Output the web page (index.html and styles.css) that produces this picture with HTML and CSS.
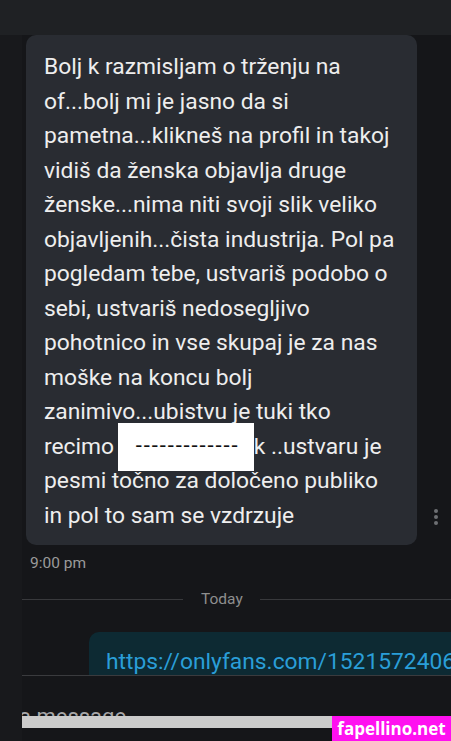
FILE: index.html
```html
<!DOCTYPE html>
<html>
<head>
<meta charset="utf-8">
<link rel="stylesheet" href="styles.css">
</head>
<body>
<div class="topbar"></div>
<div class="page">
  <div class="gutter"></div>
  <div class="main">
    <div class="msg-row">
      <div class="bubble">
        Bolj k razmisljam o trženju na<br>
        of...bolj mi je jasno da si<br>
        pametna...klikneš na profil in takoj<br>
        vidiš da ženska objavlja druge<br>
        ženske...nima niti svoji slik veliko<br>
        objavljenih...čista industrija. Pol pa<br>
        pogledam tebe, ustvariš podobo o<br>
        sebi, ustvariš nedosegljivo<br>
        pohotnico in vse skupaj je za nas<br>
        moške na koncu bolj<br>
        zanimivo...ubistvu je tuki tko<br>
        recimo <span class="redact"><span class="dashes">-------------</span></span>k ..ustvaru je<br>
        pesmi točno za določeno publiko<br>
        in pol to sam se vzdrzuje
      </div>
      <div class="kebab"><i></i><i></i><i></i></div>
    </div>
    <div class="time">9:00 pm</div>
    <div class="divider"><span class="line left"></span><span class="day">Today</span><span class="line right"></span></div>
    <div class="out-row">
      <div class="out-bubble">https://onlyfans.com/1521572406</div>
    </div>
    <div class="composer">
      <div class="placeholder-clip"><span class="placeholder">a message</span></div>
      <div class="graybar"></div>
    </div>
  </div>
</div>
<div class="watermark">fapellino.net</div>
</body>
</html>
```

FILE: styles.css
```css
html, body {
  margin: 0;
  padding: 0;
  background: #151619;
  width: 451px;
  height: 741px;
  overflow: hidden;
  font-family: Roboto, "Noto Sans", sans-serif;
}
.topbar {
  height: 35px;
  background: #1f2124;
}
.page {
  display: flex;
  height: 706px;
}
.gutter {
  width: 22px;
  background: #18191c;
  flex: none;
}
.main {
  flex: 1;
  min-width: 0;
  background: #151619;
  display: flex;
  flex-direction: column;
}
.msg-row {
  display: flex;
  align-items: flex-end;
}
.bubble {
  margin-left: 4px;
  width: 391px;
  box-sizing: border-box;
  padding: 15px 6px 12px 18px;
  background: #292c32;
  border-radius: 10px;
  color: #eeeeee;
  font-size: 22.8px;
  line-height: 34.5px;
  white-space: nowrap;
  overflow: hidden;
}
.redact {
  display: inline-block;
  width: 136px;
  height: 48px;
  margin: -7px 0 -7px -2px;
  background: #ffffff;
  vertical-align: middle;
  box-sizing: border-box;
  padding: 9px 0 0 18px;
  line-height: 28px;
  overflow: hidden;
}
.dashes {
  color: #111;
  font-size: 22px;
  letter-spacing: 1.9px;
}
.kebab {
  display: flex;
  flex-direction: column;
  gap: 2px;
  margin: 0 0 20px 17px;
}
.kebab i {
  width: 4px;
  height: 4px;
  border-radius: 2px;
  background: #6d6f73;
}
.time {
  margin: 9px 0 0 8px;
  color: #9b9b9b;
  font-size: 15.5px;
  line-height: 18px;
}
.divider {
  display: flex;
  align-items: center;
  margin-top: 18px;
  height: 18px;
}
.divider .line {
  height: 1px;
  background: #38393c;
}
.divider .left {
  width: 161px;
}
.divider .right {
  flex: 1;
}
.day {
  color: #8e8e8e;
  font-size: 15.5px;
  padding: 0 17px 0 18px;
  width: 42px;
}
.out-row {
  margin-top: 24px;
  padding-left: 67px;
  height: 43px;
  overflow: hidden;
  border-bottom: 1px solid #3a3b3e;
}
.out-bubble {
  background: #0d2a33;
  border-radius: 10px 0 0 0;
  height: 60px;
  box-sizing: border-box;
  padding: 17px 0 0 17px;
  color: #2a9ed8;
  font-size: 22.8px;
  line-height: 26px;
  white-space: nowrap;
}
.composer {
  margin-top: 30px;
}
.placeholder-clip {
  height: 10px;
  overflow: hidden;
}
.placeholder {
  display: block;
  margin-left: -3px;
  margin-top: 1px;
  color: #a7a7a9;
  font-size: 22px;
  line-height: 20px;
}
.graybar {
  height: 12px;
  width: 320px;
  background: #cbcbcb;
}
.watermark {
  position: absolute;
  left: 332px;
  top: 716px;
  width: 119px;
  height: 25px;
  background: #ff10f0;
  color: #ffffff;
  font-weight: bold;
  font-size: 17px;
  line-height: 25px;
  text-align: center;
  font-family: "Open Sans", sans-serif;
}
```
